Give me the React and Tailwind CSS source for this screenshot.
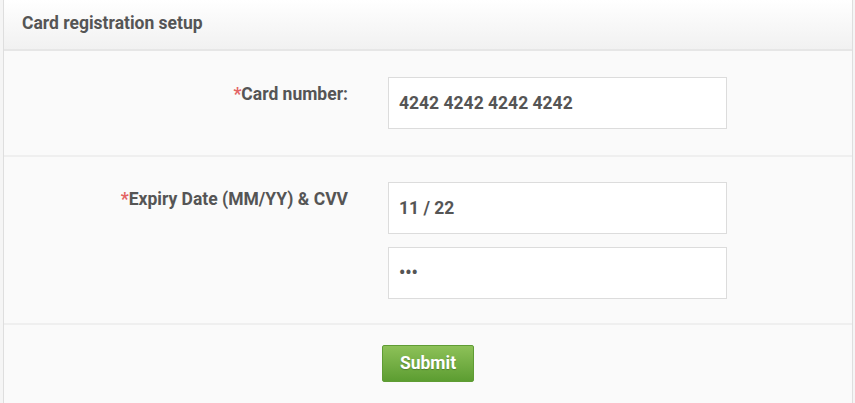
export default function App() {
  return (
    <div className="h-[403px] w-[855px] overflow-hidden bg-[#f5f5f5] font-['Roboto',sans-serif]">
      <div className="ml-[3px] mr-[2px] h-full border-x border-[#dedede] bg-[#fafafa]">
        <div className="flex h-[51px] items-center border-b-2 border-[#e6e6e6] bg-gradient-to-b from-white to-[#f1f1f1] pl-[18px]">
          <h2 className="pb-[2px] text-[17.5px] font-bold text-[#555]">Card registration setup</h2>
        </div>

        <div className="flex gap-[40px] border-b-2 border-[#efefef] py-[26px]">
          <label className="w-[344px] pt-[4px] text-right text-[17.5px] font-bold text-[#555]">
            <span className="text-[#e36464]">*</span>Card number:
          </label>
          <div className="flex h-[52px] w-[339px] items-center border border-[#dcdcdc] bg-white pl-[10px] text-[17.5px] font-bold text-[#555]">
            4242 4242 4242 4242
          </div>
        </div>

        <div className="flex gap-[40px] border-b-2 border-[#efefef] pt-[25px] pb-[24px]">
          <label className="w-[344px] pt-[4px] text-right text-[17.5px] font-bold text-[#555]">
            <span className="text-[#e36464]">*</span>Expiry Date (MM/YY) &amp; CVV
          </label>
          <div className="flex flex-col gap-[13px]">
            <div className="flex h-[52px] w-[339px] items-center border border-[#dcdcdc] bg-white pl-[10px] text-[17.5px] font-bold text-[#555]">
              11 / 22
            </div>
            <div className="flex h-[52px] w-[339px] items-center border border-[#dcdcdc] bg-white pl-[10px] text-[17.5px] font-bold text-[#555]">
              •••
            </div>
          </div>
        </div>

        <div className="flex justify-center pt-[20px]">
          <button className="h-[37px] w-[92px] rounded-[2px] border border-[#5f9c34] bg-gradient-to-b from-[#8dc158] to-[#5c9d31] text-[17.5px] font-bold text-white [text-shadow:0_1px_1px_rgba(0,0,0,0.25)]">
            Submit
          </button>
        </div>
      </div>
    </div>
  );
}
